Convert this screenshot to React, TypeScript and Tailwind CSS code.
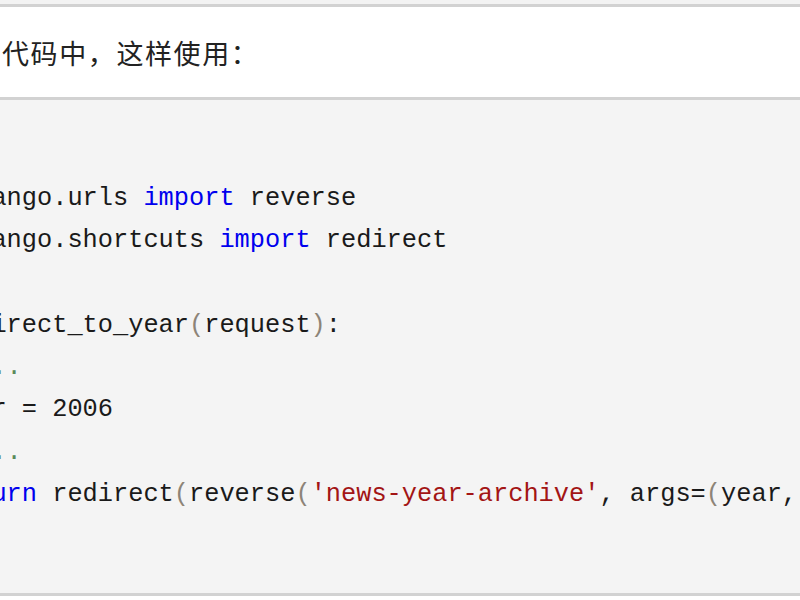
import React from "react";

type Tok = { t: string; c?: string };

const K = "text-[#0000ee]";
const S = "text-[#a31515]";
const P = "text-[#8d8478]";
const C = "text-[#5a8a5a]";

const lines: Tok[][] = [
  [{ t: "from", c: K }, { t: " django.urls " }, { t: "import", c: K }, { t: " reverse" }],
  [{ t: "from", c: K }, { t: " django.shortcuts " }, { t: "import", c: K }, { t: " redirect" }],
  [],
  [{ t: "def", c: K }, { t: " redirect_to_year" }, { t: "(", c: P }, { t: "request" }, { t: ")", c: P }, { t: ":" }],
  [{ t: "    " }, { t: "# ...", c: C }],
  [{ t: "    year = 2006" }],
  [{ t: "    " }, { t: "# ...", c: C }],
  [
    { t: "    " },
    { t: "return", c: K },
    { t: " redirect" },
    { t: "(", c: P },
    { t: "reverse" },
    { t: "(", c: P },
    { t: "'news-year-archive'", c: S },
    { t: ", args=" },
    { t: "(", c: P },
    { t: "year," },
    { t: ")))", c: P },
  ],
];

export default function App() {
  return (
    <div className="w-[800px] h-[600px] overflow-hidden bg-white flex flex-col">
      <div className="h-[4px] bg-[#f3f3f3] shrink-0" />
      <div className="h-[96px] shrink-0 bg-white border-y-[3px] border-[#d2d2d2] flex items-center">
        <p
          className="ml-[2px] text-[27px] tracking-[1.6px] text-[#222] leading-none"
          style={{ fontFamily: '"Noto Sans CJK SC", "Noto Sans", sans-serif' }}
        >
          代码中，这样使用：
        </p>
      </div>
      <div className="h-[496px] shrink-0 bg-[#f4f4f4] border-b-[3px] border-[#d2d2d2] overflow-hidden">
        <pre
          className="ml-[-115px] pt-[78px] text-[25.33px] leading-[42.3px] text-[#1a1a1a] whitespace-pre"
          style={{ fontFamily: '"Liberation Mono", "Courier New", monospace' }}
        >
          {lines.map((ln, i) => (
            <div key={i} className="h-[42.3px]">
              {ln.map((tk, j) => (
                <span key={j} className={tk.c}>
                  {tk.t}
                </span>
              ))}
            </div>
          ))}
        </pre>
      </div>
      <div className="flex-1 bg-white" />
    </div>
  );
}
